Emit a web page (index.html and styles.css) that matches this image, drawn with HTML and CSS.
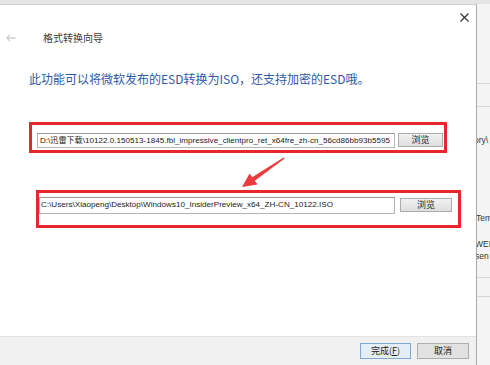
FILE: index.html
```html
<!DOCTYPE html>
<html>
<head>
<meta charset="utf-8">
<link rel="stylesheet" href="styles.css">
</head>
<body>
<div class="topstrip"></div>
<div class="screen">
  <div class="dialog">
    <div class="titlebar">
      <svg class="close" width="9" height="9" viewBox="0 0 9 9"><path d="M0.5 0.5 L8.5 8.5 M8.5 0.5 L0.5 8.5" stroke="#333" stroke-width="1.2" fill="none"/></svg>
    </div>
    <div class="nav">
      <svg class="back" width="10" height="8" viewBox="0 0 10 8"><path d="M9.5 4 H1 M4 0.8 L0.8 4 L4 7.2" stroke="#b5b5b5" stroke-width="1" fill="none"/></svg>
      <span class="title">格式转换向导</span>
    </div>
    <div class="instruction">此功能可以将微软发布的ESD转换为ISO，还支持加密的ESD哦。</div>
    <div class="box box1">
      <div class="input">D:\迅雷下载\10122.0.150513-1845.fbl_impressive_clientpro_ret_x64fre_zh-cn_56cd86bb93b5595</div>
      <div class="btn btn1">浏览</div>
    </div>
    <svg class="arrow" width="52" height="36" viewBox="0 0 52 36"><polygon points="6,32 21.5,29.5 18.8,25.8 48.6,3.6 47.6,2.4 16.2,22.2 13.6,18.6" fill="#ec3a3e"/></svg>
    <div class="box box2">
      <div class="input input2">C:\Users\Xiaopeng\Desktop\Windows10_InsiderPreview_x64_ZH-CN_10122.ISO</div>
      <div class="btn btn2">浏览</div>
    </div>
    <div class="spacer"></div>
    <div class="footer">
      <div class="fbtn primary">完成(<u>F</u>)</div>
      <div class="fbtn">取消</div>
    </div>
  </div>
  <div class="side">
    <div class="sline l1"></div>
    <div class="sline l2"></div>
    <div class="stext t1">ory\</div>
    <div class="stext t2">Tem</div>
    <div class="stext t3">WEI</div>
    <div class="stext t4">sen</div>
    <div class="sline l3"></div>
    <div class="sline l4"></div>
  </div>
</div>
</body>
</html>
```

FILE: styles.css
```css
html, body {
  margin: 0;
  padding: 0;
  width: 490px;
  height: 365px;
  overflow: hidden;
  background: #fff;
  font-family: "Noto Sans CJK SC", "Liberation Sans", sans-serif;
}
.topstrip {
  height: 4px;
  background: #e4e4e4;
}
.screen {
  display: flex;
  height: 361px;
}
.dialog {
  position: relative;
  width: 477px;
  border-right: 1px solid #a9a9a9;
  border-top: 1px solid #d0d0d0;
  box-sizing: border-box;
  display: flex;
  flex-direction: column;
  background: #fff;
}
.titlebar {
  height: 17px;
  display: flex;
  justify-content: flex-end;
  align-items: flex-end;
  padding-right: 7px;
}
.close { display: block; }
.nav {
  margin-top: 10px;
  height: 12px;
  display: flex;
  align-items: center;
  padding-left: 6px;
}
.back { display: block; }
.title {
  margin-left: 27px;
  font-size: 10px;
  line-height: 12px;
  color: #3a3a3a;
}
.instruction {
  margin-top: 27px;
  padding-left: 29px;
  font-size: 12px;
  line-height: 16px;
  color: #3158a6;
  white-space: nowrap;
}
.box {
  border: 3px solid #e8262b;
  display: flex;
  box-sizing: border-box;
}
.box1 {
  margin-top: 35px;
  margin-left: 29px;
  width: 418px;
  height: 31px;
  padding: 8px 1px 2px 5px;
}
.box2 {
  margin-top: 37px;
  margin-left: 36px;
  width: 425px;
  height: 38px;
  padding: 4px 6px 11px 0;
}
.input {
  width: 358px;
  height: 15px;
  box-sizing: border-box;
  border: 1px solid #b5b5b5;
  border-top-color: #9a9a9a;
  background: #fff;
  font-family: "Liberation Sans", "Noto Sans CJK SC", sans-serif;
  font-size: 8.1px;
  line-height: 13px;
  color: #222;
  padding-left: 2px;
  white-space: nowrap;
  overflow: hidden;
}
.input2 {
  width: 357px;
  height: 17px;
  line-height: 14px;
  padding-left: 1px;
}
.btn {
  height: 14px;
  box-sizing: border-box;
  border: 1px solid #acacac;
  background: linear-gradient(#f2f2f2, #dedede);
  font-size: 9px;
  line-height: 12px;
  text-align: center;
  color: #222;
}
.btn1 {
  margin-left: 3px;
  width: 45px;
}
.btn2 {
  margin-left: 5px;
  margin-top: 1px;
  width: 52px;
}
.arrow {
  position: absolute;
  left: 236px;
  top: 150px;
}
.spacer { flex: 1; }
.footer {
  height: 29px;
  background: #f0f0f0;
  border-top: 1px solid #e3e3e3;
  box-sizing: border-box;
  display: flex;
  justify-content: flex-end;
  gap: 6px;
  padding: 6px 7px 0 0;
}
.fbtn {
  width: 51px;
  height: 16px;
  box-sizing: border-box;
  border: 1px solid #adadad;
  background: #e1e1e1;
  font-size: 9px;
  line-height: 14px;
  text-align: center;
  color: #222;
}
.fbtn.primary {
  border-color: #7fa9d6;
  background: #e5eef7;
}
.fbtn + .fbtn { width: 52px; }
.side {
  flex: 1;
  background: #f4f4f4;
  display: flex;
  flex-direction: column;
  overflow: hidden;
  font-family: "Liberation Sans", sans-serif;
}
.sline {
  height: 1px;
  background: #d6d6d6;
}
.l1 { margin-top: 79px; }
.l2 { margin-top: 22px; }
.stext {
  font-size: 8.5px;
  line-height: 10px;
  color: #333;
  white-space: nowrap;
}
.t1 { margin-top: 28px; margin-left: -3px; }
.t2 { margin-top: 68px; margin-left: -1px; }
.t3 { margin-top: 16px; margin-left: -2px; }
.t4 { margin-top: 2px; margin-left: -2px; }
.l3 { margin-top: 16px; }
.l4 { margin-top: 18px; }
```
